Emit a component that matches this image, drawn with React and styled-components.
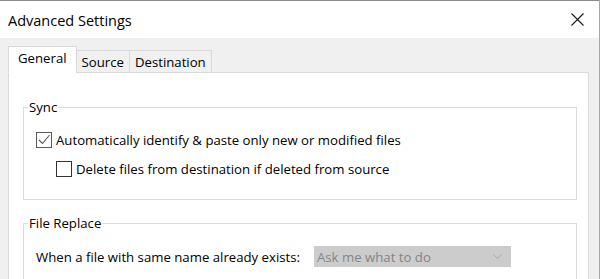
import React from 'react';
import styled, { createGlobalStyle } from 'styled-components';

const GlobalStyle = createGlobalStyle`
  html, body {
    margin: 0;
    padding: 0;
    background: #ffffff;
  }
  body {
    font-family: "Open Sans", "Noto Sans", sans-serif;
    color: #000000;
  }
`;

const Window = styled.div`
  width: 599px;
  height: 278px;
  border-top: 1px solid #8c8c8c;
  border-right: 1px solid #a8a8a8;
  display: flex;
  flex-direction: column;
  overflow: hidden;
  background: #ffffff;
`;

const TitleBar = styled.div`
  height: 37px;
  flex: none;
  display: flex;
  align-items: center;
  justify-content: space-between;
  padding: 0 15px 0 8px;
  background: #ffffff;
`;

const Title = styled.div`
  font-size: 14.5px;
  color: #000000;
  margin-top: 1px;
`;

const CloseButton = styled.div`
  width: 14px;
  height: 14px;
  display: flex;
  align-items: center;
  justify-content: center;
`;

const Body = styled.div`
  flex: 1;
  background: #f0f0f0;
  padding: 9px 10px 0 8px;
  display: flex;
  flex-direction: column;
`;

const TabStrip = styled.div`
  display: flex;
  align-items: flex-end;
  height: 26px;
  position: relative;
  z-index: 1;
  margin-bottom: -1px;
`;

const Tab = styled.div`
  font-size: 13.2px;
  display: flex;
  align-items: center;
  box-sizing: border-box;
  border: 1px solid #d9d9d9;
  border-bottom: ${p => (p.$active ? '1px solid #ffffff' : '1px solid #d9d9d9')};
  background: ${p => (p.$active ? '#ffffff' : '#f0f0f0')};
  height: ${p => (p.$active ? '27px' : '23px')};
  padding: ${p => (p.$active ? '0 9px 3px 9px' : '1px 5px 0 5px')};
  margin-left: ${p => (p.$first ? '0' : '-1px')};
`;

const Panel = styled.div`
  flex: 1;
  background: #ffffff;
  border: 1px solid #d9d9d9;
  border-bottom: none;
  padding: 25px 11px 0 14px;
  display: flex;
  flex-direction: column;
  gap: 14px;
`;

const Group = styled.fieldset`
  margin: 0;
  border: 1px solid #dcdcdc;
  padding: ${p => p.$pad || '14px 12px 20px 12px'};
  display: flex;
  flex-direction: column;
  gap: 9px;
`;

const Legend = styled.legend`
  font-size: 13.2px;
  line-height: 18px;
  padding: 0 1px;
  margin-left: -8px;
`;

const Row = styled.div`
  display: flex;
  align-items: center;
  gap: 4px;
  height: ${p => p.$h || 20}px;
  font-size: 13.2px;
  padding-left: ${p => p.$indent || 0}px;
`;

const Box = styled.span`
  width: 14px;
  height: 14px;
  border: 1px solid ${p => (p.$checked ? '#5a5a5a' : '#333333')};
  background: #ffffff;
  display: flex;
  align-items: center;
  justify-content: center;
  flex: none;
`;

const Select = styled.div`
  width: 197px;
  height: 21px;
  box-sizing: border-box;
  background: #cccccc;
  color: #858585;
  display: flex;
  align-items: center;
  justify-content: space-between;
  padding: 0 9px 0 3px;
  margin-left: 10px;
  font-size: 13.2px;
`;

const Checkbox = ({ checked }) => (
  <Box $checked={checked}>
    {checked && (
      <svg width="14" height="14" viewBox="0 0 14 14">
        <path d="M2 7 L5.5 10.5 L12.5 2" fill="none" stroke="#555" strokeWidth="1.1" />
      </svg>
    )}
  </Box>
);

export default function App() {
  return (
    <>
      <GlobalStyle />
      <Window>
        <TitleBar>
          <Title>Advanced Settings</Title>
          <CloseButton>
            <svg width="13" height="13" viewBox="0 0 13 13">
              <path d="M0.5 0.5 L12.5 12.5 M12.5 0.5 L0.5 12.5" stroke="#1a1a1a" strokeWidth="1.1" />
            </svg>
          </CloseButton>
        </TitleBar>
        <Body>
          <TabStrip>
            <Tab $active $first>General</Tab>
            <Tab>Source</Tab>
            <Tab>Destination</Tab>
          </TabStrip>
          <Panel>
            <Group>
              <Legend>Sync</Legend>
              <Row>
                <Checkbox checked />
                Automatically identify &amp; paste only new or modified files
              </Row>
              <Row $indent={20}>
                <Checkbox />
                Delete files from destination if deleted from source
              </Row>
            </Group>
            <Group $pad="14px 12px 20px 12px">
              <Legend>File Replace</Legend>
              <Row $h={21}>
                When a file with same name already exists:
                <Select>
                  Ask me what to do
                  <svg width="9" height="5" viewBox="0 0 9 5">
                    <path d="M0.5 0.5 L4.5 4.5 L8.5 0.5" fill="none" stroke="#a8a8a8" strokeWidth="1" />
                  </svg>
                </Select>
              </Row>
            </Group>
          </Panel>
        </Body>
      </Window>
    </>
  );
}
